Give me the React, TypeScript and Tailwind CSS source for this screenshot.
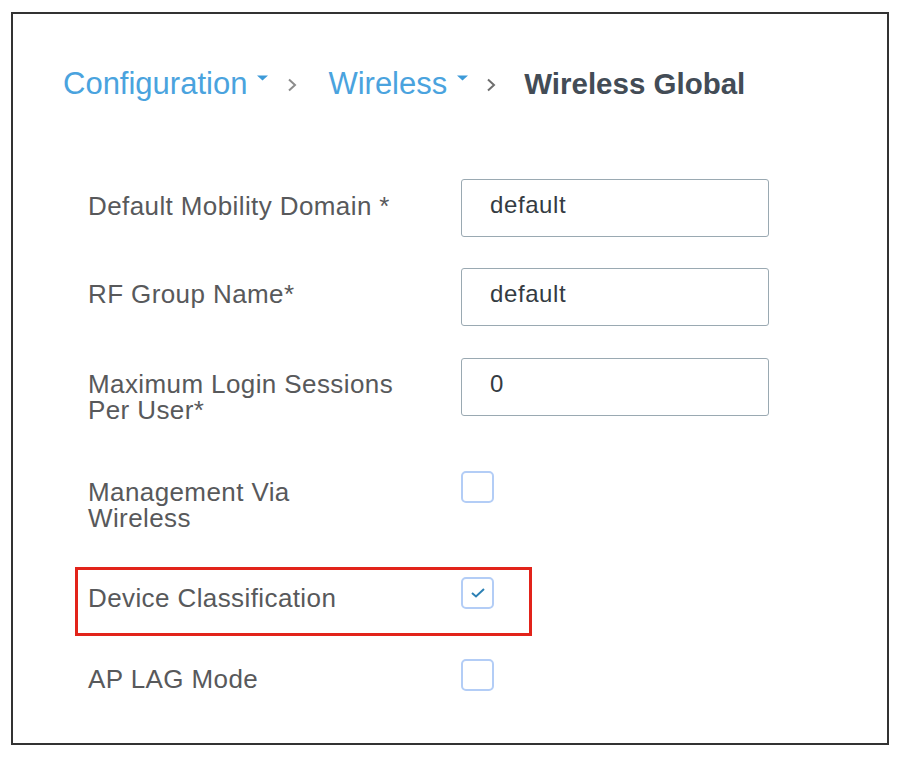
const Caret = () => (
  <svg width="11" height="6" viewBox="0 0 11 6" className="mt-[7px] ml-[10px] shrink-0">
    <path d="M0 0.5 L11 0.5 L5.5 5.5 Z" fill="#3c9ad8" />
  </svg>
);

const Chevron = ({ color }: { color: string }) => (
  <svg width="10" height="14" viewBox="0 0 10 14" className="mt-[10px] shrink-0">
    <polyline points="2,1.5 8,7 2,12.5" fill="none" stroke={color} strokeWidth="2" />
  </svg>
);

const TextField = ({ value }: { value: string }) => (
  <input
    readOnly
    defaultValue={value}
    className="w-[308px] h-[58px] border border-[#9aa9b2] rounded-[3px] pl-[28px] pb-[6px] text-[24px] tracking-[0.6px] text-[#343b42] bg-white outline-none"
  />
);

const Checkbox = ({ checked }: { checked?: boolean }) => (
  <div className="w-[33px] h-[32px] border-2 border-[#b3cdf6] rounded-[5px] flex items-center justify-center bg-white">
    {checked && (
      <svg width="14" height="10" viewBox="0 0 14 10">
        <polyline points="1,5 5,8.5 13,1" fill="none" stroke="#2c80b4" strokeWidth="2" />
      </svg>
    )}
  </div>
);

const Label = ({ children, pad }: { children: React.ReactNode; pad: string }) => (
  <div className={`w-[373px] shrink-0 text-[26px] leading-[26px] tracking-[0.4px] text-[#58595b] ${pad}`}>
    {children}
  </div>
);

export default function App() {
  return (
    <div className="w-[900px] h-[758px] bg-white pt-[12px] pl-[11px] font-['Liberation_Sans',Arial,sans-serif]">
      <div className="w-[878px] h-[733px] border-2 border-[#333333] flex flex-col">
        {/* breadcrumb */}
        <div className="flex items-start mt-[54px] pl-[50px] text-[31px] leading-[31px]">
          <span className="text-[#4aa3de]">Configuration</span>
          <Caret />
          <span className="ml-[19px]">
            <Chevron color="#8c8c8c" />
          </span>
          <span className="ml-[31px] text-[#4aa3de]">Wireless</span>
          <Caret />
          <span className="ml-[18px]">
            <Chevron color="#6e6e6e" />
          </span>
          <span className="ml-[28px] text-[29.5px] font-bold text-[#434c56]">Wireless Global</span>
        </div>

        <div className="flex flex-col pl-[75px] mt-[80px]">
          <div className="flex items-start">
            <Label pad="pt-[14px]">Default Mobility Domain *</Label>
            <TextField value="default" />
          </div>
          <div className="flex items-start mt-[31px]">
            <Label pad="pt-[13px]">RF Group Name*</Label>
            <TextField value="default" />
          </div>
          <div className="flex items-start mt-[32px]">
            <Label pad="pt-[13px]">
              Maximum Login Sessions
              <br />
              Per User*
            </Label>
            <TextField value="0" />
          </div>
          <div className="flex items-start mt-[48px]">
            <Label pad="pt-[8px]">
              Management Via
              <br />
              Wireless
            </Label>
            <Checkbox />
          </div>
          <div className="relative flex items-start mt-[46px]">
            <Label pad="pt-[8px]">Device Classification</Label>
            <Checkbox checked />
            <div className="absolute left-[-13px] top-[-10px] w-[457px] h-[69px] border-[3px] border-[#e2231a]" />
          </div>
          <div className="flex items-start mt-[48px]">
            <Label pad="pt-[7px]">AP LAG Mode</Label>
            <Checkbox />
          </div>
        </div>
      </div>
    </div>
  );
}
